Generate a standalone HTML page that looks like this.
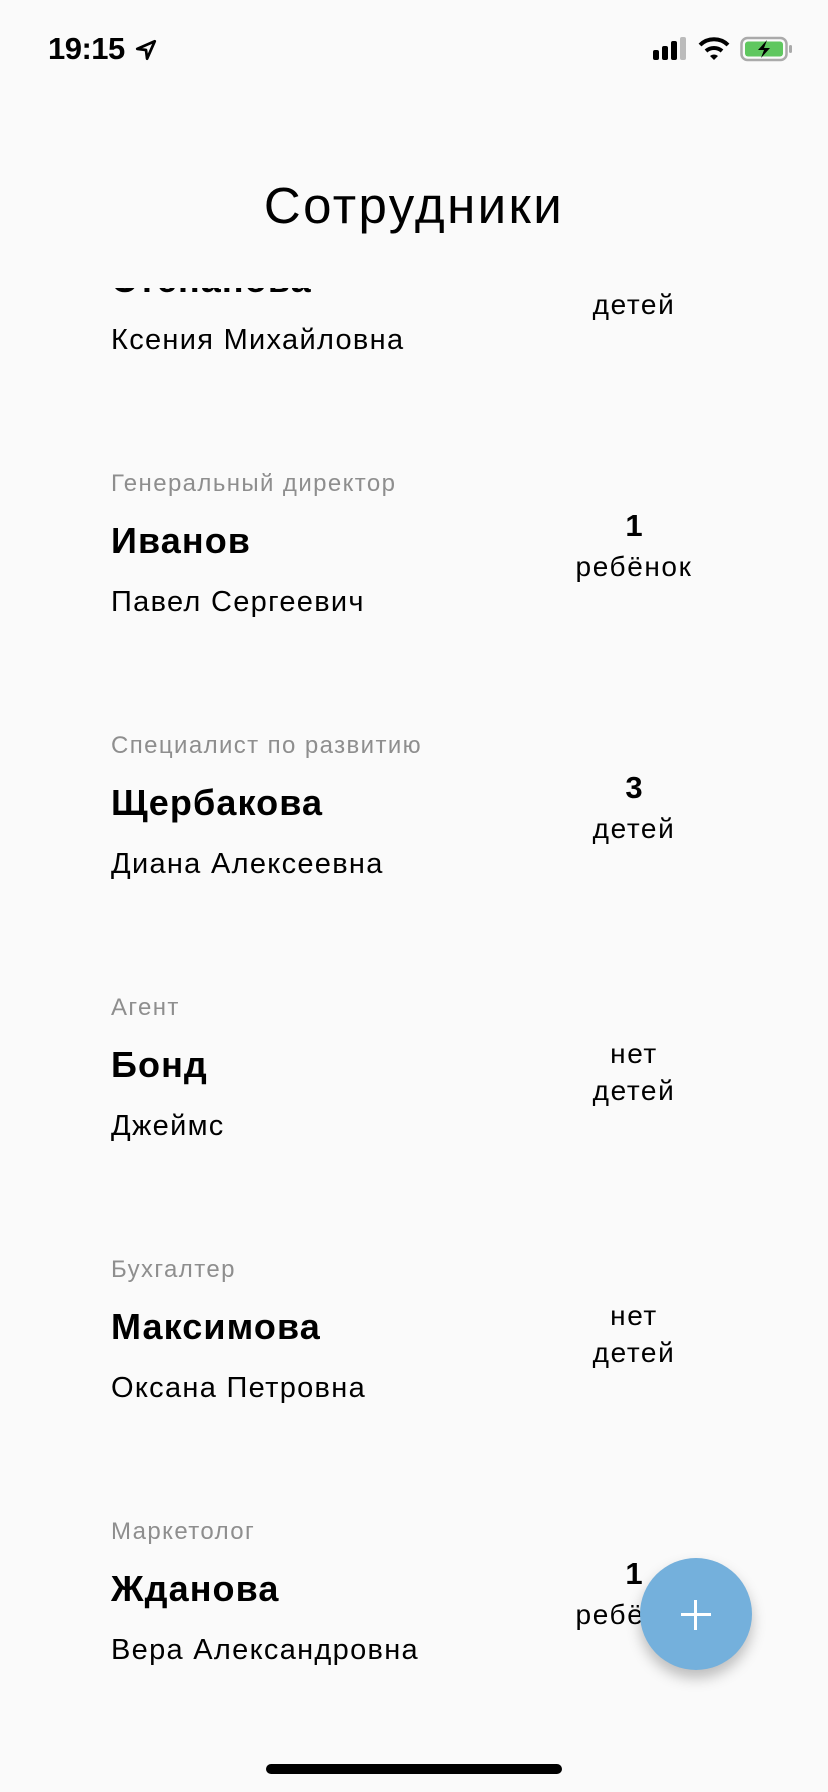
<!DOCTYPE html>
<html><head><meta charset="utf-8"><style>
body{margin:0;width:828px;height:1792px;background:#fafafa;font-family:"Liberation Sans",sans-serif;position:relative;overflow:hidden;color:#000}
.a{position:absolute;white-space:nowrap}
#list{position:absolute;left:0;top:288px;width:828px;height:1504px;overflow:hidden}
.lbl{font-size:24px;color:#8e8e8e;left:111px;letter-spacing:1.4px}
.sur{font-size:36px;font-weight:bold;left:111px;letter-spacing:1.1px}
.giv{font-size:29px;left:111px;letter-spacing:1.3px}
.cnt{font-size:31px;font-weight:bold;width:200px;left:534px;text-align:center}
.kid{font-size:28px;width:200px;left:534px;text-align:center;letter-spacing:1.6px}
</style></head><body>
<div class="a" style="left:48px;top:31px;font-size:31px;font-weight:bold;letter-spacing:-0.5px">19:15</div>
<svg class="a" style="left:134px;top:38px" width="24" height="24" viewBox="0 0 22 22"><path d="M19 3 L3 10 L11 11 L12 19 Z" fill="none" stroke="#000" stroke-width="2.5" stroke-linejoin="round"/></svg>
<svg class="a" style="left:652px;top:36px" width="40" height="26" viewBox="0 0 40 26"><rect x="1" y="14" width="6" height="10" rx="2"/><rect x="10" y="10" width="6" height="14" rx="2"/><rect x="19" y="5" width="6" height="19" rx="2"/><rect x="28" y="1" width="6" height="23" rx="2" fill="#bbb"/></svg>
<svg class="a" style="left:698px;top:36px" width="32" height="26" viewBox="0 0 32 26"><path d="M2 9 A20 20 0 0 1 30 9" fill="none" stroke="#000" stroke-width="4"/><path d="M8 15 A12 12 0 0 1 24 15" fill="none" stroke="#000" stroke-width="4"/><path d="M12 20 L16 24 L20 20 A6 6 0 0 0 12 20Z"/></svg>
<svg class="a" style="left:740px;top:36px" width="54" height="26" viewBox="0 0 54 26"><rect x="1.5" y="2" width="45" height="22" rx="6" fill="none" stroke="#aaa" stroke-width="2.5"/><rect x="5" y="5.5" width="38" height="15" rx="3" fill="#5fc75f"/><rect x="49" y="9" width="3" height="8" rx="1.5" fill="#aaa"/><path d="M27 4 L18 14 L24 14 L21 22 L30 12 L24 12 Z" fill="#000"/></svg>
<div class="a" style="left:0;width:828px;text-align:center;top:176px;font-size:51px;letter-spacing:2.4px">Сотрудники</div>
<div id="list">
<div class="a sur" style="top:-29px">Степанова</div>
<div class="a kid" style="top:1px">детей</div>
<div class="a giv" style="top:36px">Ксения Михайловна</div>

<div class="a lbl" style="top:182px">Генеральный директор</div>
<div class="a sur" style="top:232px">Иванов</div>
<div class="a cnt" style="top:220px">1</div>
<div class="a kid" style="top:263px">ребёнок</div>
<div class="a giv" style="top:298px">Павел Сергеевич</div>

<div class="a lbl" style="top:444px">Специалист по развитию</div>
<div class="a sur" style="top:494px">Щербакова</div>
<div class="a cnt" style="top:482px">3</div>
<div class="a kid" style="top:525px">детей</div>
<div class="a giv" style="top:560px">Диана Алексеевна</div>

<div class="a lbl" style="top:706px">Агент</div>
<div class="a sur" style="top:756px">Бонд</div>
<div class="a kid" style="top:750px">нет</div>
<div class="a kid" style="top:787px">детей</div>
<div class="a giv" style="top:822px">Джеймс</div>

<div class="a lbl" style="top:968px">Бухгалтер</div>
<div class="a sur" style="top:1018px">Максимова</div>
<div class="a kid" style="top:1012px">нет</div>
<div class="a kid" style="top:1049px">детей</div>
<div class="a giv" style="top:1084px">Оксана Петровна</div>

<div class="a lbl" style="top:1230px">Маркетолог</div>
<div class="a sur" style="top:1280px">Жданова</div>
<div class="a cnt" style="top:1268px">1</div>
<div class="a kid" style="top:1311px">ребёнок</div>
<div class="a giv" style="top:1346px">Вера Александровна</div>
</div>
<div class="a" style="left:640px;top:1558px;width:112px;height:112px;border-radius:50%;background:#74b0dc;box-shadow:0 8px 14px rgba(0,0,0,0.25)"></div>
<div class="a" style="left:681px;top:1613px;width:30px;height:3px;background:#fff"></div>
<div class="a" style="left:694px;top:1600px;width:3px;height:30px;background:#fff"></div>
<div class="a" style="left:266px;top:1764px;width:296px;height:10px;border-radius:5px;background:#000"></div>
</body></html>
